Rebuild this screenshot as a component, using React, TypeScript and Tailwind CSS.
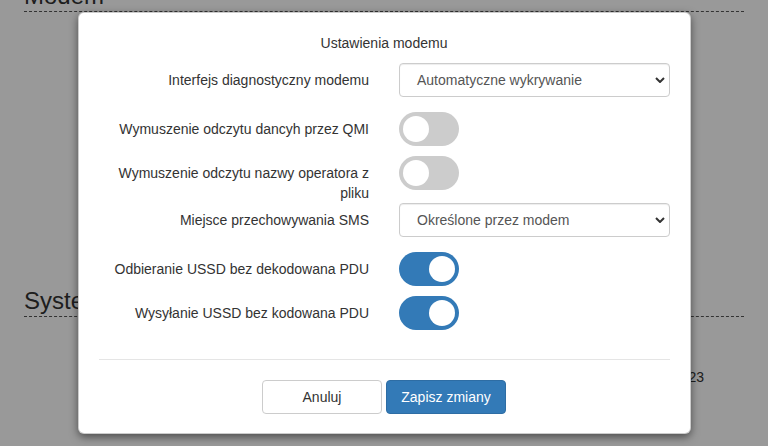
import { useState } from "react";

const ChevronDown = () => (
  <svg width="10" height="6" viewBox="0 0 10 6" className="shrink-0">
    <polyline points="1,1 5,5 9,1" fill="none" stroke="#333" strokeWidth="2" />
  </svg>
);

const Select = ({ value }: { value: string }) => (
  <div className="flex h-[34px] w-full items-center justify-between rounded-[4px] border border-[#ccc] bg-white pl-[17px] pr-[4px] text-[#555] shadow-[inset_0_1px_1px_rgba(0,0,0,0.075)]">
    <span>{value}</span>
    <ChevronDown />
  </div>
);

const Toggle = ({ on, onClick }: { on: boolean; onClick: () => void }) => (
  <button
    onClick={onClick}
    className={`relative h-[34px] w-[60px] rounded-full transition-colors ${on ? "bg-[#337ab7]" : "bg-[#ccc]"}`}
  >
    <span
      className={`absolute left-[4px] top-[4px] h-[26px] w-[26px] rounded-full bg-white transition-transform ${on ? "translate-x-[26px]" : ""}`}
    />
  </button>
);

const Row = ({ label, children, className = "" }: { label: string; children: React.ReactNode; className?: string }) => (
  <div className={`grid grid-cols-2 gap-x-[30px] ${className}`}>
    <label className="pt-[7px] text-right text-[#333]">{label}</label>
    <div className="flex items-start">{children}</div>
  </div>
);

export default function App() {
  const [qmi, setQmi] = useState(false);
  const [operator, setOperator] = useState(false);
  const [receive, setReceive] = useState(true);
  const [send, setSend] = useState(true);

  return (
    <div className="relative h-[446px] overflow-hidden bg-white font-['Liberation_Sans',Arial,sans-serif] text-[14px] leading-5 text-[#333]">
      {/* Page behind the dialog, scrolled a little */}
      <div className="-mt-[17px] px-6">
        <h2 className="border-b border-dashed border-[#555] pb-[2px] text-[24px] leading-[26px]">Modem</h2>
        <h2 className="mt-[276px] border-b border-dashed border-[#555] pb-[2px] text-[24px] leading-[26px]">System</h2>
        <div className="mt-[50px] pr-[40px] text-right">2024-01-23</div>
      </div>

      {/* Backdrop + dialog */}
      <div className="absolute inset-0 flex items-start justify-center bg-black/40 pt-[12px]">
        <div className="w-[613px] rounded-[6px] border border-black/20 bg-white shadow-[0_3px_9px_rgba(0,0,0,0.5)]">
          <div className="px-5 pt-5">
            <div className="mb-[10px] text-center">Ustawienia modemu</div>

            <Row label="Interfejs diagnostyczny modemu" className="mb-[15px]">
              <Select value="Automatyczne wykrywanie" />
            </Row>
            <Row label="Wymuszenie odczytu dancyh przez QMI" className="mb-[10px]">
              <Toggle on={qmi} onClick={() => setQmi(!qmi)} />
            </Row>
            <Row label="Wymuszenie odczytu nazwy operatora z pliku">
              <Toggle on={operator} onClick={() => setOperator(!operator)} />
            </Row>
            <Row label="Miejsce przechowywania SMS" className="mb-[15px]">
              <Select value="Określone przez modem" />
            </Row>
            <Row label="Odbieranie USSD bez dekodowana PDU" className="mb-[10px]">
              <Toggle on={receive} onClick={() => setReceive(!receive)} />
            </Row>
            <Row label="Wysyłanie USSD bez kodowana PDU">
              <Toggle on={send} onClick={() => setSend(!send)} />
            </Row>

            <div className="mt-[29px] border-t border-[#e5e5e5]" />
          </div>

          <div className="flex justify-center gap-[4px] px-5 pb-[19px] pt-5">
            <button className="h-[34px] w-[120px] rounded-[4px] border border-[#ccc] bg-white text-[#333]">Anuluj</button>
            <button className="h-[34px] w-[120px] rounded-[4px] border border-[#2e6da4] bg-[#337ab7] text-white">
              Zapisz zmiany
            </button>
          </div>
        </div>
      </div>
    </div>
  );
}
